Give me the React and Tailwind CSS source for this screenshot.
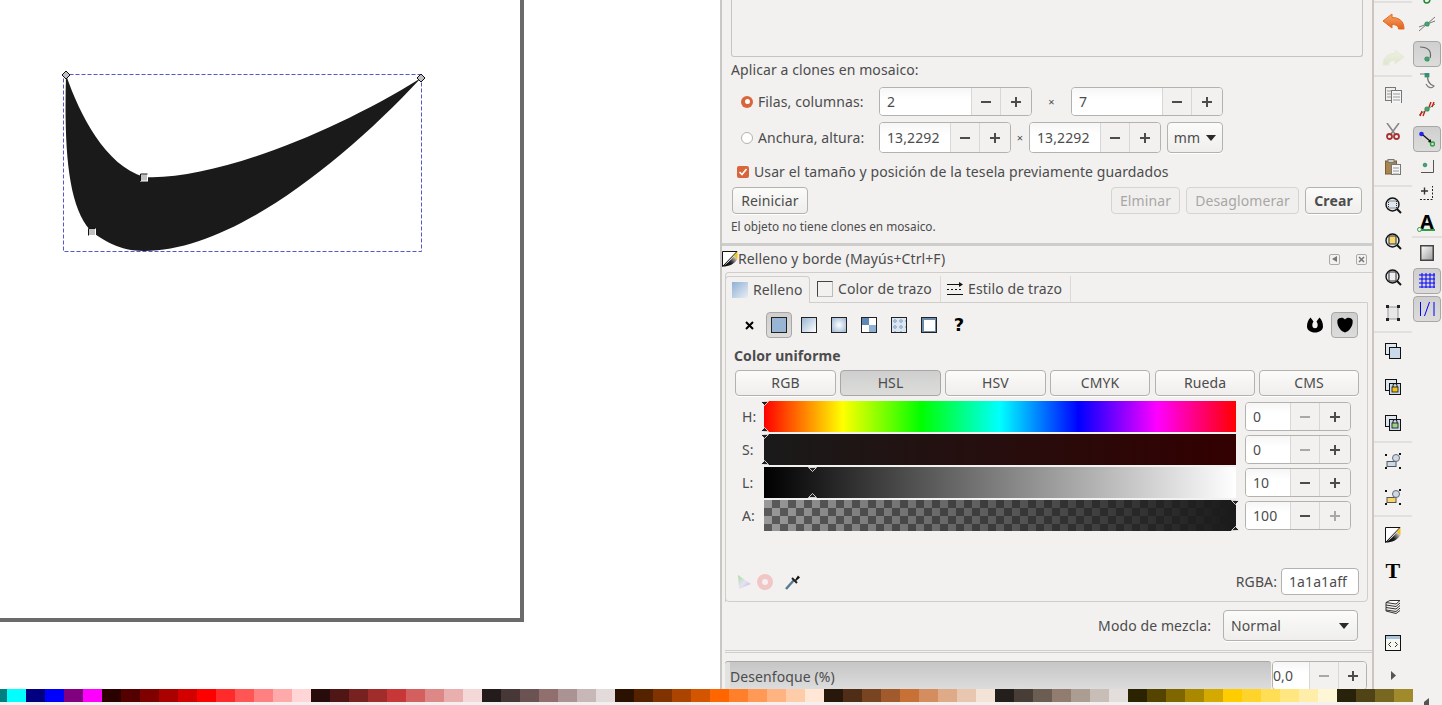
import React from "react";

const sw = [
  "#00ffff","#000080","#0000ff","#800080","#ff00ff",
  "#2b0000","#550000","#800000","#aa0000","#d40000","#ff0000","#ff2a2a","#ff5555","#ff8080","#ffaaaa","#ffd5d5",
  "#280b0b","#501616","#782121","#a02c2c","#c83737","#d35f5f","#de8787","#e9afaf","#f4d7d7",
  "#241c1c","#483737","#6c5353","#916f6f","#ac9393","#c8b7b7","#e3dbdb",
  "#2b1100","#552200","#803300","#aa4400","#d45500","#ff6600","#ff7f2a","#ff9955","#ffb380","#ffccaa","#ffe6d5",
  "#28170b","#502d16","#784421","#a05a2c","#c87137","#d38d5f","#deaa87","#e9c6af","#f4e3d7",
  "#241f1c","#483e37","#6c5d53","#917c6f","#ac9d93","#c8beb7","#e3dedb",
  "#2b2200","#554400","#806600","#aa8800","#d4aa00","#ffcc00","#ffd42a","#ffdd55","#ffe680","#ffeeaa","#fff6d5",
  "#28220b","#504416","#786721","#a08a2c",
];

const btn = "flex items-center justify-center rounded-[4px] border border-[#b4b2af] bg-[linear-gradient(#fbfbfa,#efeeec)] shadow-[0_1px_0_#fff]";
const activeBtn = "flex items-center justify-center rounded-[4px] border border-[#a8a7a5] bg-[linear-gradient(#cfcfcf,#dcdcdb)]";

const Minus = ({ dim }) => (
  <svg width="12" height="12" viewBox="0 0 12 12"><rect x="1" y="5" width="10" height="2" fill={dim ? "#a9a8a6" : "#4c4c4c"} /></svg>
);
const Plus = ({ dim }) => (
  <svg width="12" height="12" viewBox="0 0 12 12"><path d="M1 5h4V1h2v4h4v2H7v4H5V7H1z" fill={dim ? "#a9a8a6" : "#4c4c4c"} /></svg>
);

const Spinner = ({ className, inputClass, value, dimMinus, dimPlus }) => (
  <div className={`flex shrink-0 overflow-hidden rounded-[4px] border border-[#b4b2af] ${className}`}>
    <div className={`flex items-center bg-[linear-gradient(#f6f6f6,#fff_40%)] ${inputClass}`}>{value}</div>
    <div className="flex w-[29px] shrink-0 items-center justify-center border-l border-[#d9d7d5] bg-[#f2f1f0]"><Minus dim={dimMinus} /></div>
    <div className="flex flex-1 items-center justify-center border-l border-[#d9d7d5] bg-[#f2f1f0]"><Plus dim={dimPlus} /></div>
  </div>
);

const Caret = () => (
  <svg width="10" height="6" viewBox="0 0 10 6"><path d="M0 0h10L5 6z" fill="#2a2a2a" /></svg>
);

const FillIcon = ({ id }) => (
  <svg width="16" height="16" viewBox="0 0 16 16">
    <defs><linearGradient id={id} x1="0" y1="1" x2="1" y2="0.400"><stop offset="0" stopColor="#000" /><stop offset="0.600" stopColor="#222" /><stop offset="1" stopColor="#bbb" /></linearGradient></defs>
    <path d="M0.500 0.500H15L0.500 15.500z" fill="#fff" stroke="#111" />
    <path d="M0.500 15.500C5 12.500 9 9 11.500 5.500L15.500 8C12.500 13 7 15.500 0.500 15.500z" fill={`url(#${id})`} />
    <path d="M11.500 5L15.500 1V8z" fill="#f5c211" />
  </svg>
);

const Arrow = ({ id, flip, from, to, line }) => (
  <svg width="23" height="17" viewBox="0 0 23 17" className={flip ? "-scale-x-100" : ""}>
    <defs><linearGradient id={id} x1="0" y1="0" x2="0" y2="1"><stop offset="0" stopColor={from} /><stop offset="1" stopColor={to} /></linearGradient></defs>
    <path d="M1 8L10 1V4.500C17 4.500 22 8 22 16L16.500 16C16.500 13 14 11.500 10 11.500V15z" fill={`url(#${id})`} stroke={line} strokeLinejoin="round" />
  </svg>
);

const Doc = ({ x, y, w = 10, h = 13, fill = "#fff", line = "#777" }) => (
  <g>
    <rect x={x + 0.5} y={y + 0.5} width={w} height={h} fill={fill} stroke={line} />
    <path d={`M${x + 2} ${y + 4}h${w - 3}M${x + 2} ${y + 7}h${w - 3}M${x + 2} ${y + 10}h${w - 3}`} stroke="#999" />
  </g>
);

const CopyIcon = () => (
  <svg width="17" height="16" viewBox="0 0 17 16"><Doc x={0} y={0} fill="#eee" /><Doc x={6} y={3} fill="#f5f5f5" /></svg>
);
const CutIcon = () => (
  <svg width="14" height="17" viewBox="0 0 14 17">
    <path d="M1 0L9 11M13 0L5 11" stroke="#888" strokeWidth="1.6" />
    <circle cx="3.500" cy="13.500" r="2.500" fill="none" stroke="#a83232" strokeWidth="1.800" />
    <circle cx="10.500" cy="13.500" r="2.500" fill="none" stroke="#a83232" strokeWidth="1.800" />
  </svg>
);
const PasteIcon = () => (
  <svg width="16" height="16" viewBox="0 0 16 16">
    <rect x="0.500" y="2" width="11" height="13" fill="#a9844f" stroke="#7a5c30" />
    <rect x="3" y="0.500" width="6" height="3" fill="#ccc" stroke="#777" />
    <Doc x={6} y={5} w={9} h={10} fill="#f5f5f5" />
  </svg>
);
const ZoomIcon = ({ children }) => (
  <svg width="17" height="17" viewBox="0 0 17 17">
    <circle cx="7.500" cy="7.500" r="6.500" fill="#dfe6ee" stroke="#111" strokeWidth="1.400" />
    {children}
    <path d="M12 12l4 4" stroke="#111" strokeWidth="2" />
  </svg>
);
const FitIcon = () => (
  <svg width="14" height="16" viewBox="0 0 14 16">
    <rect x="2" y="2" width="10" height="12" fill="#e8e8e8" stroke="#999" />
    <path d="M0 0h3v3H0zM11 0h3v3h-3zM0 13h3v3H0zM11 13h3v3h-3z" fill="#222" />
  </svg>
);
const Stack = ({ lock, lockFill }) => (
  <svg width="16" height="16" viewBox="0 0 16 16">
    <rect x="0.500" y="0.500" width="11" height="11" fill="#dfe6ee" stroke="#111" />
    <rect x="4.500" y="4.500" width="11" height="11" fill="#c9d9ea" stroke="#111" />
    {lock && <path d="M8 8V6.500a2 2 0 0 1 4 0V8" fill="none" stroke="#111" />}
    {lock && <rect x="7" y="8" width="6" height="5" fill={lockFill} stroke="#111" strokeWidth="0.800" />}
  </svg>
);
const SelectIcon = ({ fill }) => (
  <svg width="16" height="16" viewBox="0 0 16 16">
    <path d="M0 1h2v2H0zM14 0h2v2h-2zM0 14h2v2H0zM14 14h2v2h-2z" fill="#111" />
    <rect x="2" y="8.500" width="9" height="5" fill={fill} stroke="#555" />
    <circle cx="11" cy="5" r="3.500" fill="#cfd9e3" stroke="#667" />
  </svg>
);
const LayersIcon = () => (
  <svg width="16" height="14" viewBox="0 0 16 14">
    <path d="M1 2.500L5 0.500H15L11 4z" fill="#fff" stroke="#333" />
    <path d="M1 2.500V5L11 6.500L15 3M1 5V7.500L11 9L15 5.500M1 7.500V10L11 11.500L15 8M1 10V11L11 13.500L15 10.500" fill="none" stroke="#333" />
  </svg>
);
const XmlIcon = () => (
  <svg width="16" height="16" viewBox="0 0 16 16">
    <rect x="0.500" y="0.500" width="15" height="15" fill="#f7f7f2" stroke="#111" />
    <rect x="1" y="1" width="14" height="3" fill="#a9c3dc" />
    <path d="M6 7L3.500 9.500L6 12M10 7L12.500 9.500L10 12" fill="none" stroke="#333" />
  </svg>
);

const node = "#2e9e44";
const S = ({ children }) => <svg width="16" height="16" viewBox="0 0 16 16">{children}</svg>;
const snapIcons = {
  cross: <S><path d="M0 15L16 1M0 11L16 5" stroke="#777" /><circle cx="8" cy="8" r="2" fill="#5b8fb0" stroke={node} strokeWidth="1.200" /></S>,
  path: <S><path d="M1 1C9 1 13 5 11 12" fill="none" stroke="#666" strokeWidth="1.200" /><circle cx="8" cy="13" r="2" fill="#5b8fb0" stroke={node} strokeWidth="1.200" /></S>,
  cusp: <S><path d="M1 1H9C8 6 9 11 15 13C13 16 9 15 7 11" fill="none" stroke="#777" strokeWidth="1.200" /><rect x="6" y="0" width="4" height="4" fill="#3f7fa8" stroke={node} strokeWidth="0.800" /></S>,
  mid: <S><path d="M0 14L16 3" stroke={node} /><path d="M3 10L1 15M6 10L4 15M12 1L10 6M15 1L13 6" stroke="#d01818" strokeWidth="1.400" /><circle cx="8" cy="8" r="2" fill="#5b8fb0" stroke={node} strokeWidth="1.200" /></S>,
  bbox: <S><circle cx="2.500" cy="3" r="2.300" fill="#2222ee" /><path d="M4 4L11 10" stroke="#111" strokeWidth="1.300" /><path d="M9 11L12.500 12L11.500 8z" fill="#111" /><circle cx="13.500" cy="13" r="2" fill="none" stroke={node} strokeWidth="1.400" /></S>,
  center: <S><path d="M2 14.500H14.500V2" fill="none" stroke="#555" /><circle cx="6" cy="7" r="1.800" fill="#5b8fb0" stroke={node} strokeWidth="1" /></S>,
  plus: <S><path d="M2 5H9M5.500 1.500V8.500" stroke="#333" strokeWidth="1.400" /><path d="M1 13.500H13.500V0" fill="none" stroke="#222" strokeDasharray="2 1.500" /></S>,
  page: <svg width="14" height="16" viewBox="0 0 14 16"><defs><linearGradient id="pg" x1="0" y1="0" x2="1" y2="1"><stop offset="0" stopColor="#fff" /><stop offset="1" stopColor="#999" /></linearGradient></defs><rect x="0.750" y="0.750" width="12.500" height="14.500" fill="url(#pg)" stroke="#444" strokeWidth="1.500" /></svg>,
  grid: <S><path d="M0 3H16M0 7H16M0 11H16M0 15H16M3 0V16M7 0V16M11 0V16M15 0V16" stroke="#0000ff" transform="translate(0 -1)" /></S>,
  guide: <svg width="16" height="16" viewBox="0 0 16 16"><path d="M1.500 1V15M15 1V15M10.500 1L5.500 15" stroke="#0000ff" /></svg>,
};

const CmdSep = () => <div className="h-[2px] w-[38px] shrink-0 bg-[#e2e0de]" />;
const Cmd = ({ children }) => <div className="flex h-[36px] w-[38px] shrink-0 items-center justify-center">{children}</div>;

const SnapItem = ({ className, active, children }) => (
  <div className={`flex shrink-0 items-center justify-center ${className}`}>
    {active ? <div className={`${activeBtn} h-full w-[28px]`}>{children}</div> : children}
  </div>
);

const Tip = ({ className, up }) => (
  <svg width="9" height="5" viewBox="0 0 9 5" className={`absolute ${className}`}>
    <path d={up ? "M4.500 0.500L8.500 4.500H0.500z" : "M0.500 0.500H8.500L4.500 4.500z"} fill="#222" stroke="#fff" strokeWidth="0.800" />
  </svg>
);

const SliderRow = ({ label, value, bar, tips, dimMinus, dimPlus }) => (
  <div className="flex h-[31px] items-center pl-[16px]">
    <div className="w-[22px]">{label}</div>
    <div className={`relative h-full w-[472px] ${bar}`}>{tips}</div>
    <Spinner className="ml-[9px] h-[29px] w-[106px]" inputClass="w-[44px] pl-[7px]" value={value} dimMinus={dimMinus} dimPlus={dimPlus} />
  </div>
);

const Tabs = () => (
  <div className="-ml-px flex h-[29px] items-end">
    <div className="relative z-10 -mb-px flex h-[27px] w-[85px] items-center rounded-t-[4px] border border-b-0 border-[#d0cecb] bg-[#f2f1f0] pl-[6px]">
      <div className="h-[16px] w-[16px] bg-[linear-gradient(135deg,#8fb0d4,#e8eef5)]" />
      <span className="ml-[5px]">Relleno</span>
    </div>
    <div className="flex h-[26px] w-[131px] items-center border-r border-[#dcdad8] pl-[7px]">
      <div className="h-[16px] w-[16px] border border-[#444] border-r-[#bbb] border-b-[#bbb]" />
      <span className="ml-[5px] whitespace-nowrap">Color de trazo</span>
    </div>
    <div className="flex h-[26px] w-[130px] items-center border-r border-[#dcdad8] pl-[6px]">
      <svg width="16" height="16" viewBox="0 0 16 16">
        <path d="M0 3.500H12M0 8.500H2M4 8.500H6M8 8.500H10M12 8.500H14M0 13.500H16" stroke="#111" />
        <path d="M12 1L16 3.500L12 6z" fill="#111" />
      </svg>
      <span className="ml-[5px] whitespace-nowrap">Estilo de trazo</span>
    </div>
  </div>
);

const Paint = ({ className }) => <div className={`h-[16px] w-[16px] border border-[#222] ${className}`} />;
const Cell = ({ children, className = "" }) => <div className={`flex h-[26px] w-[30px] items-center justify-center ${className}`}>{children}</div>;

const colorTabs = [
  { t: "RGB", c: "w-[101px]" },
  { t: "HSL", c: "ml-[4px] w-[101px]" },
  { t: "HSV", c: "ml-[4px] w-[101px]" },
  { t: "CMYK", c: "ml-[4px] w-[100px]" },
  { t: "Rueda", c: "ml-[5px] w-[100px]" },
  { t: "CMS", c: "ml-[4px] w-[100px]" },
];

const FillTab = () => (
  <div className="-ml-px h-[300px] w-[643px] rounded-b-[4px] border border-[#d0cecb] pt-[9px]">
    <div className="flex h-[26px] pl-[8px] pr-[9px]">
      <Cell>
        <svg width="9" height="9" viewBox="0 0 9 9"><path d="M1 1L8 8M8 1L1 8" stroke="#000" strokeWidth="2" /></svg>
      </Cell>
      <Cell><div className={`${activeBtn} h-[26px] w-[26px]`}><Paint className="bg-[#98b6d4]" /></div></Cell>
      <Cell><Paint className="bg-[linear-gradient(135deg,#9ab7d4,#fff)]" /></Cell>
      <Cell><Paint className="bg-[radial-gradient(circle,#fff,#9ab7d4)]" /></Cell>
      <Cell><Paint className="bg-[conic-gradient(#fff_25%,#8fb0d2_0_50%,#fff_0_75%,#5e88b5_0)]" /></Cell>
      <Cell><Paint className="bg-[#dbe6f0] bg-[radial-gradient(circle,#a3bdd7_40%,transparent_45%)] bg-[length:6px_6px]" /></Cell>
      <Cell>
        <div className="h-[16px] w-[16px] border border-[#222] bg-[#6d8cab] pt-[2px] pl-[2px]"><div className="h-[11px] w-[11px] bg-white" /></div>
      </Cell>
      <Cell><span className="font-['DejaVu_Sans',sans-serif] text-[18px] font-bold text-black">?</span></Cell>
      <div className="ml-auto flex items-center">
        <Cell>
          <svg width="16" height="16" viewBox="0 0 16 16"><path d="M3.500 0.500C1 3 0 6 0 9.500C0 13 3.500 15.500 8 15.500C12.500 15.500 16 13 16 9.500C16 6 15 3 12.500 0.500C11.500 2 10.500 3 9.500 4.500C11 6 11 9.500 10 10.500C9 11.500 7 11.500 6 10.500C5 9.500 5 6 6.500 4.500C5.500 3 4.500 2 3.500 0.500z" fill="#000" /></svg>
        </Cell>
        <div className={`${activeBtn} ml-px h-[26px] w-[27px]`}>
          <svg width="16" height="16" viewBox="0 0 16 16"><path d="M0.500 3C2 0.500 6 0 8 2.500C10 0 14 0.500 15.500 3C16.500 8 13 14 8 15.500C3 14 -0.500 8 0.500 3z" fill="#000" /></svg>
        </div>
      </div>
    </div>
    <div className="mt-[6px] flex h-[24px] items-center pl-[8px] font-bold">Color uniforme</div>
    <div className="mt-[2px] ml-[9px] flex h-[26px]">
      {colorTabs.map(({ t, c }) => (
        <div key={t} className={`${t === "HSL" ? activeBtn : btn} ${c}`}>{t}</div>
      ))}
    </div>
    <div className="mt-[5px] flex flex-col gap-[2px]">
      <SliderRow
        label="H:"
        value="0"
        dimMinus
        bar="bg-[linear-gradient(to_right,#f00,#ff0_16.67%,#0f0_33.33%,#0ff_50%,#00f_66.67%,#f0f_83.33%,#f00)]"
        tips={<><Tip className="-left-[4px] top-0" /><Tip up className="-left-[4px] bottom-0" /></>}
      />
      <SliderRow
        label="S:"
        value="0"
        dimMinus
        bar="bg-[linear-gradient(to_right,#1a1a1a,#330000)]"
        tips={<><Tip className="-left-[4px] top-0" /><Tip up className="-left-[4px] bottom-0" /></>}
      />
      <SliderRow
        label="L:"
        value="10"
        bar="bg-[linear-gradient(to_right,#000,#fff)]"
        tips={<><Tip className="left-[44px] top-0" /><Tip up className="left-[44px] bottom-0" /></>}
      />
      <SliderRow
        label="A:"
        value="100"
        dimPlus
        bar="bg-[linear-gradient(to_right,rgba(26,26,26,0),#1a1a1a),conic-gradient(#5a5a5a_25%,#999_0_50%,#5a5a5a_0_75%,#999_0)] [background-size:100%_100%,16px_16px]"
        tips={<><Tip className="-right-[4px] top-0" /><Tip up className="-right-[4px] bottom-0" /></>}
      />
    </div>
    <div className="mt-[37px] flex h-[27px] items-center pl-[11px] pr-[8px]">
      <svg width="15" height="16" viewBox="0 0 15 16">
        <defs><linearGradient id="tri" x1="0" y1="0" x2="1" y2="1"><stop offset="0" stopColor="#a8dca0" /><stop offset="0.500" stopColor="#e4e4f0" /><stop offset="1" stopColor="#c8b0e8" /></linearGradient></defs>
        <path d="M1 1L14 10L2 15z" fill="url(#tri)" />
      </svg>
      <svg width="16" height="16" viewBox="0 0 16 16" className="ml-[5px]"><circle cx="8" cy="8" r="5.500" fill="none" stroke="#f2c6c6" strokeWidth="5" /></svg>
      <svg width="16" height="16" viewBox="0 0 16 16" className="ml-[12px]">
        <path d="M1 15L9 6" stroke="#5a7a94" strokeWidth="2.500" />
        <path d="M7 4L12 9" stroke="#222" strokeWidth="2" />
        <path d="M10 6L13 1.500L15 3.500L11 7z" fill="#111" />
      </svg>
      <span className="ml-auto">RGBA:</span>
      <div className="ml-[4px] flex h-[27px] w-[78px] items-center rounded-[4px] border border-[#b4b2af] bg-white pl-[7px]">1a1a1aff</div>
    </div>
  </div>
);

const TileSection = () => (
  <div className="h-[243px]">
    <div className="ml-[9px] h-[57px] w-[632px] rounded-b-[3px] border border-t-0 border-[#c6c4c1]" />
    <div className="flex h-[26px] items-center pl-[9px]">Aplicar a clones en mosaico:</div>
    <div className="mt-[4px] flex h-[29px] items-center pl-[19px]">
      <div className="flex h-[12px] w-[12px] items-center justify-center rounded-full bg-[#d9663a]"><div className="h-[5px] w-[5px] rounded-full bg-white" /></div>
      <div className="ml-[5px] w-[121px]">Filas, columnas:</div>
      <Spinner className="h-[29px] w-[153px]" inputClass="w-[91px] pl-[7px]" value="2" />
      <div className="w-[39px] text-center text-[11px]">×</div>
      <Spinner className="h-[29px] w-[152px]" inputClass="w-[90px] pl-[7px]" value="7" />
    </div>
    <div className="mt-[6px] flex h-[31px] items-center pl-[19px]">
      <div className="h-[12px] w-[12px] rounded-full border border-[#b4b2af] bg-white" />
      <div className="ml-[5px] w-[121px]">Anchura, altura:</div>
      <Spinner className="h-[31px] w-[132px]" inputClass="w-[70px] pl-[7px]" value="13,2292" />
      <div className="w-[18px] text-center text-[11px]">×</div>
      <Spinner className="h-[31px] w-[132px]" inputClass="w-[70px] pl-[7px]" value="13,2292" />
      <div className={`${btn} ml-[6px] h-[31px] w-[56px] gap-[6px]`}>mm <Caret /></div>
    </div>
    <div className="mt-[7px] flex h-[24px] items-center pl-[15px]">
      <div className="flex h-[12px] w-[12px] items-center justify-center rounded-[2px] bg-[#d9663a]">
        <svg width="10" height="10" viewBox="0 0 10 10"><path d="M1.500 5L4 7.500L8.500 2" fill="none" stroke="#fff" strokeWidth="1.600" /></svg>
      </div>
      <span className="ml-[5px]">Usar el tamaño y posición de la tesela previamente guardados</span>
    </div>
    <div className="mt-[3px] flex h-[27px] pl-[10px]">
      <div className={`${btn} w-[76px]`}>Reiniciar</div>
      <div className="ml-[303px] flex w-[69px] items-center justify-center rounded-[4px] border border-[#d6d4d2] bg-[#f0efee] text-[#a8a7a5]">Elminar</div>
      <div className="ml-[6px] flex w-[113px] items-center justify-center rounded-[4px] border border-[#d6d4d2] bg-[#f0efee] text-[#a8a7a5]">Desaglomerar</div>
      <div className={`${btn} ml-[6px] w-[57px] font-bold`}>Crear</div>
    </div>
    <div className="mt-[3px] flex h-[19px] items-center pl-[9px] text-[11.8px] tracking-normal">El objeto no tiene clones en mosaico.</div>
  </div>
);

const Panel = () => (
  <div className="h-[689px] w-[654px] shrink-0 overflow-hidden border-x-2 border-l-[#c9c7c4] border-r-[#cbc6c1]">
    <TileSection />
    <div className="h-[3px] bg-[#cfcdcb]" />
    <div className="flex h-[26px] items-center">
      <FillIcon id="fi1" />
      <span>Relleno y borde (Mayús+Ctrl+F)</span>
      <div className="ml-auto flex items-center gap-[16px] pr-[5px]">
        <div className="flex h-[11px] w-[11px] items-center justify-center rounded-[2px] border border-[#aaa]">
          <svg width="5" height="6" viewBox="0 0 5 6"><path d="M5 0V6L0 3z" fill="#777" /></svg>
        </div>
        <div className="flex h-[11px] w-[11px] items-center justify-center rounded-[2px] border border-[#aaa]">
          <svg width="7" height="7" viewBox="0 0 7 7"><path d="M1 1L6 6M6 1L1 6" stroke="#777" strokeWidth="1.500" /></svg>
        </div>
      </div>
    </div>
    <div className="ml-[3px] rounded-tl-[4px] border-t border-l border-[#d0cecb]">
      <Tabs />
      <FillTab />
    </div>
    <div className="mt-[8px] flex h-[31px] items-center justify-end gap-[12px] pr-[14px]">
      <span>Modo de mezcla:</span>
      <div className={`${btn} h-[31px] w-[135px] pl-[7px] pr-[8px]`}>
        <span className="flex-1">Normal</span>
        <Caret />
      </div>
    </div>
    <div className="ml-[3px] mt-[9px] h-[3px] border-y border-[#d0cecb]" />
    <div className="ml-[3px] mt-[8px] flex">
      <div className="flex h-[30px] w-[546px] items-center rounded-t-[3px] border-t border-[#a9a8a6] bg-[linear-gradient(to_right,#e2e2e1_5px,transparent_5px),linear-gradient(#c6c6c6,#dedede)] pl-[5px]">Desenfoque (%)</div>
      <Spinner className="ml-px h-[29px] w-[95px]" inputClass="w-[36px] pl-0" value="0,0" dimMinus />
    </div>
  </div>
);

const CommandBar = () => (
  <div className="flex h-[689px] w-[38px] shrink-0 flex-col">
    <div className="h-px" />
    <CmdSep />
    <Cmd><Arrow id="un" from="#f9a866" to="#e2601c" line="#e06a24" /></Cmd>
    <Cmd><Arrow id="re" flip from="#eef1e2" to="#dfe5cf" line="#e6ead8" /></Cmd>
    <CmdSep />
    <Cmd><CopyIcon /></Cmd>
    <Cmd><CutIcon /></Cmd>
    <Cmd><PasteIcon /></Cmd>
    <CmdSep />
    <Cmd><ZoomIcon><rect x="3.500" y="4" width="8" height="7" fill="none" stroke="#333" strokeDasharray="1 1" /></ZoomIcon></Cmd>
    <Cmd><ZoomIcon><rect x="4" y="3" width="7" height="8" fill="#f5d76e" stroke="#333" /></ZoomIcon></Cmd>
    <Cmd><ZoomIcon><rect x="4" y="3" width="7" height="9" fill="#eee" stroke="#333" /></ZoomIcon></Cmd>
    <Cmd><FitIcon /></Cmd>
    <CmdSep />
    <Cmd><Stack /></Cmd>
    <Cmd><Stack lock lockFill="#f5c211" /></Cmd>
    <Cmd><Stack lock lockFill="#9fd08a" /></Cmd>
    <CmdSep />
    <Cmd><SelectIcon fill="#c9d9ea" /></Cmd>
    <Cmd><SelectIcon fill="#f5d76e" /></Cmd>
    <CmdSep />
    <Cmd><FillIcon id="fi2" /></Cmd>
    <Cmd><span className="font-['Liberation_Serif',serif] text-[22px] leading-none font-bold text-black">T</span></Cmd>
    <Cmd><LayersIcon /></Cmd>
    <Cmd><XmlIcon /></Cmd>
    <div className="flex h-[28px] items-center justify-center">
      <svg width="5" height="9" viewBox="0 0 5 9"><path d="M0 0L5 4.500L0 9z" fill="#555" /></svg>
    </div>
  </div>
);

const SnapBar = () => (
  <div className="flex h-[689px] w-[30px] shrink-0 flex-col overflow-hidden">
    <div className="flex h-[10px] justify-center">
      <svg width="10" height="4" viewBox="0 0 10 4"><path d="M2 0C2 4 7 4 8 0" fill="none" stroke="#1b8a2e" strokeWidth="1.500" /></svg>
    </div>
    <SnapItem className="h-[28px]">{snapIcons.cross}</SnapItem>
    <SnapItem className="h-[29px] pt-[3px]" active>{snapIcons.path}</SnapItem>
    <SnapItem className="h-[27px]">{snapIcons.cusp}</SnapItem>
    <SnapItem className="h-[30px]">{snapIcons.mid}</SnapItem>
    <SnapItem className="h-[28px] pt-[2px]" active>{snapIcons.bbox}</SnapItem>
    <SnapItem className="h-[28px]">{snapIcons.center}</SnapItem>
    <SnapItem className="h-[28px]">{snapIcons.plus}</SnapItem>
    <SnapItem className="h-[28px]">
      <div className="relative flex h-[17px] w-[16px] items-start justify-center border-b-2 border-[#2e9e44]">
        <span className="text-[20px] leading-[15px] font-bold text-black">A</span>
        <div className="absolute -bottom-[3px] -left-[2px] h-[5px] w-[5px] rounded-full border border-[#2e9e44] bg-[#f2f1f0]" />
      </div>
    </SnapItem>
    <div className="h-[2px] bg-[#e2e0de]" />
    <SnapItem className="h-[30px]">{snapIcons.page}</SnapItem>
    <SnapItem className="h-[26px]" active>{snapIcons.grid}</SnapItem>
    <SnapItem className="mt-[2px] h-[26px]" active>{snapIcons.guide}</SnapItem>
  </div>
);

const Handle = ({ x, y }) => (
  <g>
    <rect x={x - 3.500} y={y - 3.500} width="7" height="7" fill="#c0c0c0" stroke="#fff" />
    <path d={`M${x - 3.500} ${y + 3.500}V${y - 3.500}H${x + 3.500}`} fill="none" stroke="#111" />
  </g>
);
const Diamond = ({ x, y }) => (
  <path d={`M${x} ${y - 4}L${x + 4} ${y}L${x} ${y + 4}L${x - 4} ${y}z`} fill="#c0c0c0" stroke="#111" />
);

const Canvas = () => (
  <div className="h-[689px] w-[720px] shrink-0 bg-white">
    <div className="h-[622px] w-[524px] border-r-4 border-b-4 border-[#6b6b6b]">
      <svg width="520" height="618" viewBox="0 0 520 618" className="block">
        <path
          d="M66 75C80 115 105 165 144 177C210 181 330 135 421 78C340 165 230 251 144 251C120 251 102 240 90 230C68 205 64 150 66 75z"
          fill="#1a1a1a"
        />
        <rect x="63.500" y="74.500" width="358" height="177" fill="none" stroke="#fff" />
        <rect x="63.500" y="74.500" width="358" height="177" fill="none" stroke="#5555cc" strokeDasharray="4 2" />
        <Diamond x={66} y={75} />
        <Diamond x={421} y={78} />
        <Handle x={144} y={177.500} />
        <Handle x={92} y={232} />
      </svg>
    </div>
  </div>
);

const Palette = () => (
  <div className="flex h-[16px] bg-[#f2f1f0]">
    <div className="flex h-[13px]">
      <div className="h-full w-[7px] bg-[#008080]" />
      {sw.map((c, i) => (
        <div key={i} className="h-full w-[19px]" style={{ backgroundColor: c }} />
      ))}
    </div>
    <svg width="5" height="7" viewBox="0 0 5 7" className="ml-[11px] mt-[9px]"><path d="M5 0V7H0V4z" fill="#555" /></svg>
  </div>
);

export default function App() {
  return (
    <div className="h-[705px] w-[1442px] overflow-hidden bg-[#f2f1f0] font-['Noto_Sans',sans-serif] text-[14px] leading-none tracking-[0.1px] text-[#4c4c4c]">
      <div className="flex h-[689px]">
        <Canvas />
        <Panel />
        <CommandBar />
        <SnapBar />
      </div>
      <Palette />
    </div>
  );
}
